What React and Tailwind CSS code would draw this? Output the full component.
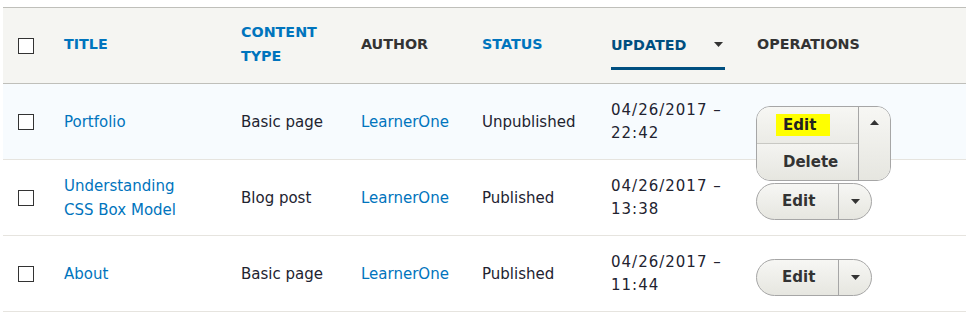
import React from "react";

const rows = [
  { title: "Portfolio", type: "Basic page", author: "LearnerOne", status: "Unpublished", date: "04/26/2017 –", time: "22:42", open: true },
  { title: "Understanding CSS Box Model", type: "Blog post", author: "LearnerOne", status: "Published", date: "04/26/2017 –", time: "13:38" },
  { title: "About", type: "Basic page", author: "LearnerOne", status: "Published", date: "04/26/2017 –", time: "11:44" },
];

function Arrow({ up }) {
  return (
    <svg width="9" height="5" viewBox="0 0 9 5">
      <path d={up ? "M0 5 L4.5 0 L9 5 Z" : "M0 0 L9 0 L4.5 5 Z"} fill="#333" />
    </svg>
  );
}

function Checkbox() {
  return <span className="block w-[16px] h-[16px] border border-[#333] bg-white" />;
}

function Dropbutton({ open }) {
  if (open) {
    return (
      <div className="relative h-[37px] mt-[7px]">
        <div className="absolute left-0 top-[-1px] z-10 flex w-[135px] rounded-[14px] border border-[#a6a6a6] overflow-hidden">
          <div className="flex flex-col w-[101px]">
            <div className="h-[37px] flex items-center pl-[19px] border-b border-[#c8c8c3] bg-gradient-to-b from-[#f7f7f4] to-[#ebebe6]">
              <span className="bg-[#ffff00] pl-[7px] pr-[14px] leading-[22px] font-bold text-[#222]">Edit</span>
            </div>
            <div className="h-[36px] flex items-center pl-[26px] font-bold text-[#333] bg-gradient-to-b from-[#f4f4f1] to-[#e6e6e0]">
              Delete
            </div>
          </div>
          <div className="flex-1 flex justify-center pt-[13px] border-l border-[#a6a6a6] bg-gradient-to-b from-[#f7f7f4] to-[#e6e6e0]">
            <Arrow up />
          </div>
        </div>
      </div>
    );
  }
  return (
    <div className="flex w-[116px] h-[37px] mt-[7px] rounded-full border border-[#a6a6a6] overflow-hidden bg-gradient-to-b from-[#f7f7f4] to-[#e6e6e0]">
      <div className="w-[81px] flex items-center pl-[25px] font-bold text-[#333]">Edit</div>
      <div className="flex-1 flex items-center justify-center border-l border-[#a6a6a6]">
        <Arrow />
      </div>
    </div>
  );
}

export default function App() {
  return (
    <div className="bg-white w-[972px] h-[331px] pt-[7px] pl-[3px] font-['DejaVu_Sans',sans-serif] text-[15px] leading-6 text-[#222330]">
      <table className="table-fixed w-[963px] border-collapse">
        <colgroup>
          <col className="w-[46px]" />
          <col className="w-[177px]" />
          <col className="w-[120px]" />
          <col className="w-[121px]" />
          <col className="w-[129px]" />
          <col className="w-[146px]" />
          <col className="w-[224px]" />
        </colgroup>
        <thead>
          <tr className="h-[76px] bg-[#f5f5f2] border-t border-b border-[#bfbfba] text-[14.3px] font-bold text-left">
            <th className="pl-[15px] pt-[1px] align-middle"><Checkbox /></th>
            <th className="pl-[15px] pb-[4px] text-[#0074bd] font-bold">TITLE</th>
            <th className="pl-[15px] pr-[10px] pb-[4px] text-[#0074bd] font-bold">CONTENT TYPE</th>
            <th className="pl-[15px] pb-[4px] text-[#333] font-bold">AUTHOR</th>
            <th className="pl-[15px] pb-[4px] text-[#0074bd] font-bold">STATUS</th>
            <th className="pl-[15px] font-bold">
              <span className="flex items-center justify-between w-[114px] pt-[12px] pb-[10px] pr-[2px] mt-[-1px] border-b-[3px] border-[#004f80] text-[#004f80]">
                UPDATED
                <Arrow />
              </span>
            </th>
            <th className="pl-[15px] pb-[4px] text-[#333] font-bold">OPERATIONS</th>
          </tr>
        </thead>
        <tbody>
          {rows.map((r, i) => (
            <tr key={i} className={`h-[76px] border-b border-[#e6e4df] ${r.open ? "bg-[#f7fbfe]" : "bg-white"}`}>
              <td className="pl-[15px] align-middle"><Checkbox /></td>
              <td className="pl-[15px] pr-[30px] text-[#0074bd]">{r.title}</td>
              <td className="pl-[15px]">{r.type}</td>
              <td className="pl-[15px] text-[#0074bd]">{r.author}</td>
              <td className="pl-[15px]">{r.status}</td>
              <td className="pl-[15px] pr-[4px] tracking-[1px] leading-[23px]">
                {r.date}
                <br />
                {r.time}
              </td>
              <td className="pl-[14px] align-middle">
                <Dropbutton open={r.open} />
              </td>
            </tr>
          ))}
        </tbody>
      </table>
    </div>
  );
}
